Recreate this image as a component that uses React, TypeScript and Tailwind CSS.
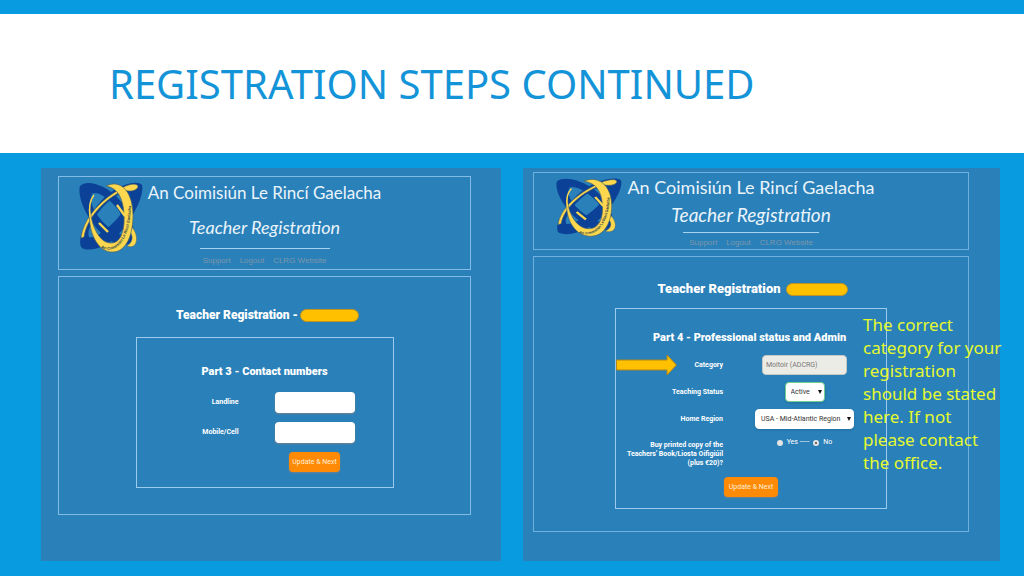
import React from 'react';

const Logo = ({ className }: { className: string }) => (
  <svg viewBox="0 0 64 72" preserveAspectRatio="none" className={className} role="img" aria-label="CLRG">
    <g fill="#0b4297" fillRule="evenodd">
      <path d="M63 4 C66 16 50 44 37 56 C26 67 8 72 2 66 C-2 56 8 36 22 20 C36 4 58 -2 63 4 Z M49 11 C40 11 29 19 19 32 C11 43 8 52 10 56 C16 58 27 49 36 40 C46 29 51 19 49 11 Z" />
      <path d="M1 5 C8 -2 26 4 38 16 C52 30 58 50 53 61 C44 68 32 62 22 52 C6 36 -2 14 1 5 Z M13 13 C10 20 14 30 24 41 C32 49 42 56 46 53 C49 46 44 33 34 23 C26 15 17 10 13 13 Z" />
    </g>
    <path
      d="M2 57 C4 40 18 22 38 10 C46 4 57 1 59 5 C59 10 50 11 45 9 C26 18 8 36 5 56 Z"
      fill="#fdd84e"
      stroke="#51645f"
      strokeWidth="0.6"
    />
    <path d="M53 46 C61 56 58 69 48 65 C53 62 55 56 51 51 Z" fill="#fdd84e" stroke="#51645f" strokeWidth="0.5" />
    <path
      d="M27 5 C43 -3 54 13 54 34 C54 56 46 71 34 71 C20 72 7 52 11 23 C11 42 19 61 31 62 C42 63 46 49 45 33 C44 17 39 7 27 5 Z"
      fill="#fdd84e"
      stroke="#51645f"
      strokeWidth="0.7"
    />
    <path d="M15 14 C10 20 10 29 11 36" fill="none" stroke="#fdd84e" strokeWidth="1.4" />
    <path d="M20 42 L29 51 M38 24 L46 35" stroke="#fdd84e" strokeWidth="2.4" />
    <path id="band" d="M22 67 C38 74 52 58 52 22" fill="none" />
    <text fill="#273f4c" fontSize="4" fontWeight="700" fontFamily="Liberation Sans, sans-serif">
      <textPath href="#band">An Coimisiún Le Rincí Gaelacha</textPath>
    </text>
  </svg>
);

const Arrow = () => (
  <svg viewBox="0 0 62 22" className="absolute left-0 top-[45px] h-[22px] w-[62px]" aria-hidden="true">
    <path d="M0.5 6 H51 V1 L60.5 11 L51 21 V16 H0.5 Z" fill="#ffc000" stroke="#ad8617" />
  </svg>
);

const Redacted = ({ className }: { className: string }) => (
  <span className={`h-[13px] rounded-full border border-[#bd9220] bg-[#ffc000] ${className}`} />
);

const NavLinks = () => (
  <nav className="flex justify-center gap-[9px] font-['Liberation_Sans',sans-serif] text-[8px] leading-[12px] text-[#7d97ab]">
    <a href="#support">Support</a>
    <a href="#logout">Logout</a>
    <a href="#clrg">CLRG Website</a>
  </nav>
);

const Select = ({ id, option, className }: { id: string; option: string; className: string }) => (
  <div className="relative">
    <select
      id={id}
      className={`block h-5 appearance-none rounded-sm border bg-white pl-[5px] text-[7px] leading-[10px] text-[#333] shadow-sm ${className}`}
    >
      <option>{option}</option>
    </select>
    <svg viewBox="0 0 4 4" className="pointer-events-none absolute right-[3px] top-2 size-1" aria-hidden="true">
      <path d="M0 0 H4 L2 4 Z" fill="#111" />
    </svg>
  </div>
);

const buttonStyle =
  'h-5 whitespace-nowrap rounded-sm bg-[#ff8a05] text-center text-[7px] leading-[10px] font-normal text-[#fff0d8] shadow-[0_1px_2px_#6f8291]';

const ContactPanel = () => (
  <section className="bg-[#2a80b9] pb-[45px] pl-[17px] pr-[30px] pt-2">
    <header className="grid grid-cols-[64px_1fr_64px] border border-[#82bce6] px-5 pb-[2px] pt-1">
      <Logo className="h-[72px] w-16" />
      <div className="flex flex-col items-center whitespace-nowrap font-[Lato,sans-serif] text-[#eaf4fb]">
        <p className="text-[17px] leading-[24px]">An Coimisiún Le Rincí Gaelacha</p>
        <p className="mt-[10px] text-[18px] italic leading-[24px]">Teacher Registration</p>
        <hr className="mb-[6px] mt-[9px] w-[130px] border-[#a8d3f0]" />
        <NavLinks />
      </div>
    </header>

    <div className="mt-[6px] flex flex-col items-center border border-[#82bce6] pb-[26px] pt-[29px]">
      <h2 className="flex items-center gap-[2px] pl-[6px] text-[12px] font-black leading-[18px]">
        Teacher Registration -<Redacted className="w-[59px]" />
      </h2>
      <form className="mt-[13px] w-[258px] border border-[#9bcbed] pb-[15px] pt-[25px]">
        <h3 className="text-center text-[11px] font-black leading-[18px]">Part 3 - Contact numbers</h3>
        <div className="mt-[11px] grid grid-cols-[102px_80px] items-center gap-x-9 gap-y-[9px] text-[7px] font-bold">
          <label htmlFor="landline" className="text-right">Landline</label>
          <input id="landline" type="tel" className="h-[21px] w-full rounded-sm bg-white px-1 text-black shadow-[0_1px_2px_#6f8291]" />
          <label htmlFor="mobile" className="text-right">Mobile/Cell</label>
          <input id="mobile" type="tel" className="h-[21px] w-full rounded-sm bg-white px-1 text-black shadow-[0_1px_2px_#6f8291]" />
          <button type="button" className={`col-start-2 w-[51px] justify-self-center ${buttonStyle}`}>Update &amp; Next</button>
        </div>
      </form>
    </div>
  </section>
);

const StatusPanel = () => (
  <section className="relative bg-[#2a80b9] pb-[27px] pl-[10px] pr-[31px] pt-1">
    <header className="grid grid-cols-[66px_1fr_66px] border border-[#6fb0df] px-[22px] pt-1">
      <Logo className="h-[60px] w-[66px]" />
      <div className="flex flex-col items-center whitespace-nowrap font-[Lato,sans-serif] text-[#eaf4fb]">
        <p className="text-[18px] leading-[20px]">An Coimisiún Le Rincí Gaelacha</p>
        <p className="mt-2 text-[19px] italic leading-[20px]">Teacher Registration</p>
        <hr className="mb-1 mt-[7px] w-[136px] border-[#a8d3f0]" />
        <NavLinks />
      </div>
    </header>

    <div className="mt-[6px] flex flex-col items-center border border-[#6fb0df] pb-[22px] pt-[23px]">
      <h2 className="flex items-center gap-[5px] pl-[3px] text-[13px] font-black leading-[18px]">
        Teacher Registration <Redacted className="w-[62px]" />
      </h2>
      <form className="relative mt-[10px] w-[272px] border border-[#9bcbed] pb-[11px] pt-[20px]">
        <Arrow />
        <h3 className="pl-[37px] text-[11px] font-black leading-[18px]">Part 4 - Professional status and Admin</h3>
        <div className="mt-2 grid grid-cols-[107px_99px] items-center justify-items-center gap-x-8 gap-y-[7px] text-[7px] leading-[9px]">
          <label htmlFor="category" className="justify-self-end font-bold">Category</label>
          <input
            id="category"
            type="text"
            readOnly
            defaultValue="Moltoir (ADCRG)"
            className="h-5 w-[85px] rounded-sm border border-[#c5c9c5] bg-[#ecece6] px-[3px] text-[7px] text-[#777]"
          />
          <label htmlFor="status" className="justify-self-end font-bold">Teaching Status</label>
          <Select id="status" option="Active" className="w-10 border-[#6fd08c]" />
          <label htmlFor="region" className="justify-self-end font-bold">Home Region</label>
          <Select id="region" option="USA - Mid-Atlantic Region" className="w-[99px] border-white" />
          <p id="book" className="mt-[5px] justify-self-end whitespace-nowrap text-right font-bold">
            Buy printed copy of the
            <br />
            Teachers' Book/Liosta Oifigiúil
            <br />
            (plus €20)?
          </p>
          <div role="radiogroup" aria-labelledby="book" className="mt-[2px] flex items-center gap-1 self-start">
            <input id="yes" type="radio" name="book" className="size-[6px] appearance-none rounded-full bg-[#e3e3e3]" />
            <label htmlFor="yes">Yes -----</label>
            <input
              id="no"
              type="radio"
              name="book"
              defaultChecked
              className="size-[6px] appearance-none rounded-full border-2 border-[#e3e3e3] bg-[#444]"
            />
            <label htmlFor="no">No</label>
          </div>
        </div>
        <button type="button" className={`mx-auto mt-[9px] block w-[54px] ${buttonStyle}`}>Update &amp; Next</button>
      </form>
    </div>

    <p className="absolute -right-1 top-[145px] w-[141px] font-['Noto_Sans',sans-serif] text-[17px] leading-[23px] text-[#e6fa2e]">
      The correct category for your registration should be stated here. If not please contact the office.
    </p>
  </section>
);

export default function App() {
  return (
    <div className="flex min-h-screen flex-col bg-[#099be0] pt-[14px]">
      <header className="bg-white px-[109px] py-[45px]">
        <h1 className="whitespace-nowrap font-['Noto_Sans',sans-serif] text-[40px] leading-[49px] text-[#1494d8]">
          REGISTRATION STEPS CONTINUED
        </h1>
      </header>
      <main className="grid grow grid-cols-[460fr_477fr] gap-[22px] pb-[15px] pl-[41px] pr-6 pt-[15px] font-[Roboto,sans-serif] text-white">
        <ContactPanel />
        <StatusPanel />
      </main>
    </div>
  );
}
